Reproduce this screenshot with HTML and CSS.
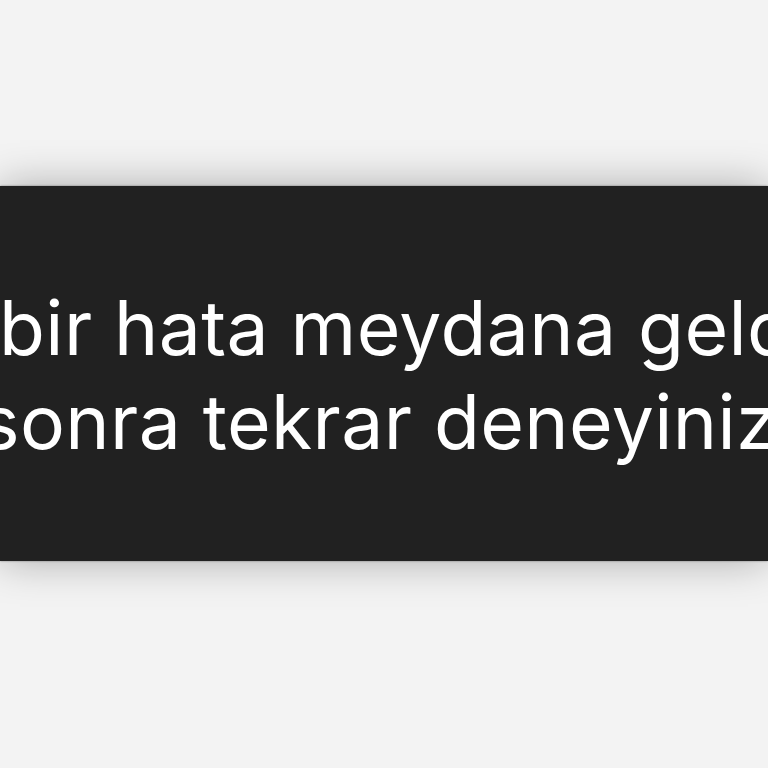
FILE: index.html
```html
<!DOCTYPE html>
<html lang="tr">
<head>
<meta charset="utf-8">
<link rel="stylesheet" href="styles.css">
</head>
<body>
<div class="page">
  <div class="toast" role="alert">
    <p class="msg">
      <span class="line line-1">bir hata meydana geldi.</span>
      <span class="line line-2">sonra tekrar deneyiniz.</span>
    </p>
  </div>
</div>
</body>
</html>
```
FILE: styles.css
```css
html, body {
  margin: 0;
  padding: 0;
  background: #f3f3f3;
  width: 768px;
  height: 768px;
  overflow: hidden;
}
.page {
  height: 768px;
  display: flex;
  flex-direction: column;
  padding-top: 186px;
  box-sizing: border-box;
}
.toast {
  height: 375px;
  background: #212121;
  box-shadow: 0 0 40px rgba(0, 0, 0, 0.3), 0 0 2px rgba(0, 0, 0, 0.4);
  display: flex;
  align-items: center;
  overflow: hidden;
}
.msg {
  margin: 0;
  padding-top: 2px;
  font-family: Inter, "Noto Sans", sans-serif;
  font-size: 75px;
  letter-spacing: 0.4px;
  line-height: 94px;
  color: #ffffff;
  white-space: nowrap;
}
.line {
  display: block;
}
.line-1 {
  margin-left: -1px;
}
.line-2 {
  margin-left: -20px;
}
```
